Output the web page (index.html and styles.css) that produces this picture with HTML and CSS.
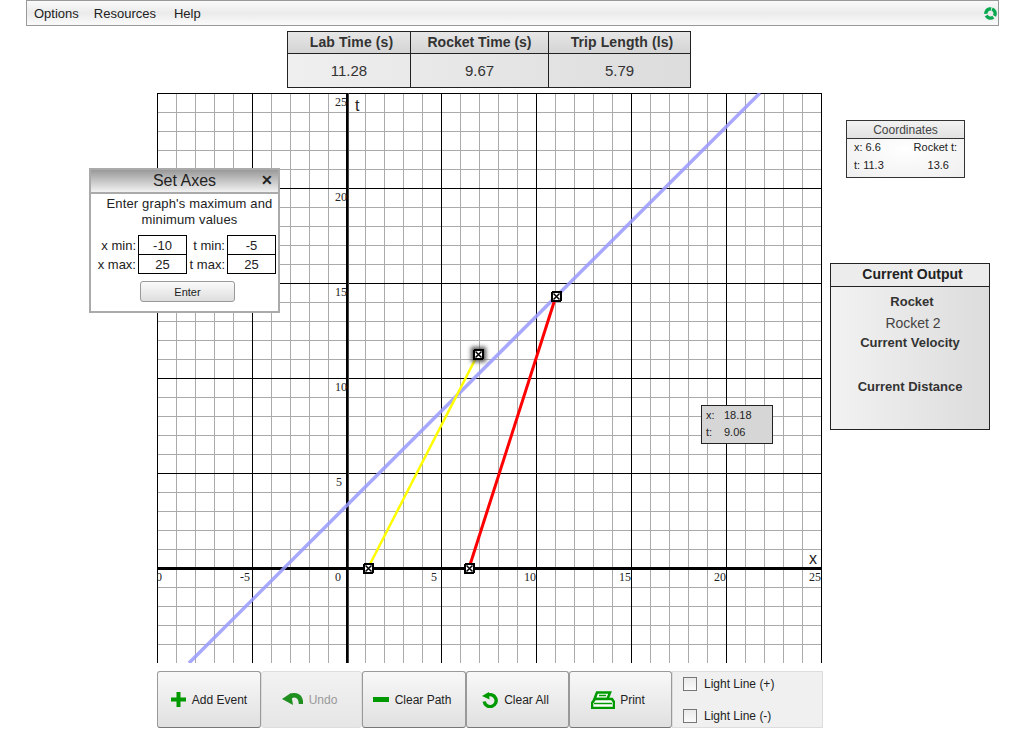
FILE: index.html

```html
<!DOCTYPE html>
<html lang="en">
<head>
  <meta charset="UTF-8" />
  <title>Rocket Spacetime Graph</title>
  <link rel="stylesheet" href="styles.css">
</head>
<body>
  <nav class="menubar">
    <span class="menu-item">Options</span>
    <span class="menu-item resources">Resources</span>
    <span class="menu-item">Help</span>
    <svg class="logo" width="13" height="13" viewBox="0 0 13 13">
      <circle cx="6.5" cy="6.5" r="4.6" fill="none" stroke="#0aa84f" stroke-width="3.4" stroke-dasharray="8 1.6" transform="rotate(-70 6.5 6.5)" />
    </svg>
  </nav>

  <div class="readouts">
    <div class="readout-col lab">
      <div class="readout-head">Lab Time (s)</div>
      <div class="readout-val">11.28</div>
    </div>
    <div class="readout-col rocket">
      <div class="readout-head">Rocket Time (s)</div>
      <div class="readout-val">9.67</div>
    </div>
    <div class="readout-col trip">
      <div class="readout-head">Trip Length (ls)</div>
      <div class="readout-val">5.79</div>
    </div>
  </div>

  <div class="workspace">
    <div class="graph">
      <svg class="plot" width="665" height="570" viewBox="0 0 665 570" shape-rendering="crispEdges">
        <defs>
          <pattern id="minor-h" width="19" height="19" patternUnits="userSpaceOnUse">
            <path d="M0 0.5H19" stroke="#aaa" fill="none" />
          </pattern>
          <pattern id="major-h" width="95" height="95" patternUnits="userSpaceOnUse">
            <path d="M0 0.5H95" stroke="#000" fill="none" />
          </pattern>
          <pattern id="minor-v" width="19" height="19" patternUnits="userSpaceOnUse">
            <path d="M0.5 0V19" stroke="#aaa" fill="none" />
          </pattern>
          <pattern id="major-v" width="95" height="95" patternUnits="userSpaceOnUse">
            <path d="M0.5 0V95" stroke="#000" fill="none" />
          </pattern>
          <!-- right of the t axis the grid sits one pixel further left -->
          <pattern id="minor-v2" width="19" height="19" patternUnits="userSpaceOnUse" patternTransform="translate(189 0)">
            <path d="M0.5 0V19" stroke="#aaa" fill="none" />
          </pattern>
          <pattern id="major-v2" width="95" height="95" patternUnits="userSpaceOnUse" patternTransform="translate(189 0)">
            <path d="M0.5 0V95" stroke="#000" fill="none" />
          </pattern>
          <filter id="glow" x="-60%" y="-60%" width="220%" height="220%">
            <feGaussianBlur stdDeviation="2" />
          </filter>
          <symbol id="marker" width="11" height="11" viewBox="0 0 11 11">
            <rect width="11" height="11" rx="2" fill="#000" />
            <rect x="2" y="2" width="7" height="7" fill="#fff" />
            <path d="M2.5 2.5L8.5 8.5M8.5 2.5L2.5 8.5" stroke="#000" stroke-width="1.5" shape-rendering="auto" />
          </symbol>
        </defs>
        <rect width="665" height="570" fill="#fff" />
        <rect width="665" height="570" fill="url(#minor-h)" />
        <rect width="189" height="570" fill="url(#minor-v)" />
        <rect x="189" width="476" height="570" fill="url(#minor-v2)" />
        <rect width="665" height="570" fill="url(#major-h)" />
        <rect width="189" height="570" fill="url(#major-v)" />
        <rect x="189" width="476" height="570" fill="url(#major-v2)" />
        <rect x="189" width="2" height="570" fill="#000" />
        <rect x="191" width="1" height="570" fill="#444" />
        <rect y="474" width="665" height="3" fill="#000" />

        <g class="tick">
          <text x="5" y="488" text-anchor="end">-10</text>
          <text x="93" y="488" text-anchor="end">-5</text>
          <text x="184" y="488" text-anchor="end">0</text>
          <text x="280" y="488" text-anchor="end">5</text>
          <text x="379" y="488" text-anchor="end">10</text>
          <text x="474" y="488" text-anchor="end">15</text>
          <text x="569" y="488" text-anchor="end">20</text>
          <text x="664" y="488" text-anchor="end">25</text>
          <text x="190" y="13" text-anchor="end">25</text>
          <text x="190" y="108" text-anchor="end">20</text>
          <text x="190" y="203" text-anchor="end">15</text>
          <text x="190" y="298" text-anchor="end">10</text>
          <text x="185" y="393" text-anchor="end">5</text>
        </g>
        <text class="axis-name" x="198" y="18">t</text>
        <text class="axis-name" x="652" y="471">x</text>

        <g shape-rendering="auto" fill="none">
          <line x1="32" y1="570" x2="603" y2="0" stroke="#9999ff" stroke-opacity="0.85" stroke-width="3.5" />
          <line x1="211" y1="475" x2="321" y2="261" stroke="#ffff00" stroke-width="2.5" />
          <line x1="312" y1="475" x2="399" y2="203" stroke="#ff0000" stroke-width="3" />
        </g>
        <rect x="314" y="254" width="15" height="15" fill="#555" filter="url(#glow)" shape-rendering="auto" />
        <use href="#marker" x="206" y="470" />
        <use href="#marker" x="307" y="470" />
        <use href="#marker" x="394" y="198" />
        <use href="#marker" x="316" y="256" />
      </svg>
      <div class="cursor-tip">
        <div class="tip-row"><span class="tip-key">x:</span><span>18.18</span></div>
        <div class="tip-row"><span class="tip-key">t:</span><span>9.06</span></div>
      </div>
    </div>

    <aside class="side">
      <div class="coords">
        <div class="coords-head">Coordinates</div>
        <div class="coords-body">
          <span>x: 6.6</span><span>Rocket t:</span>
          <span>t: 11.3</span><span class="coords-rocket">13.6</span>
        </div>
      </div>
      <div class="output">
        <div class="output-head">Current Output</div>
        <div class="output-body">
          <div class="output-rocket">Rocket</div>
          <div class="output-name">Rocket 2</div>
          <div class="output-velocity">Current Velocity</div>
          <div class="output-distance">Current Distance</div>
        </div>
      </div>
    </aside>
  </div>

  <div class="toolbar">
    <button class="tool add">
      <svg width="15" height="15" viewBox="0 0 15 15"><path d="M5.5 0h4v5.5H15v4H9.5V15h-4V9.5H0v-4h5.5z" fill="#009a00" /></svg>
      Add Event
    </button>
    <button class="tool undo off">
      <svg width="21" height="15" viewBox="0 0 21 15">
        <path d="M6 7C10 1 19 2 19 12" fill="none" stroke="#1f8f1f" stroke-width="4.5" />
        <path d="M0 7L9 1L11 13z" fill="#1f8f1f" />
      </svg>
      Undo
    </button>
    <button class="tool clear-path">
      <svg width="16" height="5" viewBox="0 0 16 5"><rect width="16" height="5" fill="#009a00" /></svg>
      Clear Path
    </button>
    <button class="tool clear-all">
      <svg width="16" height="16" viewBox="0 0 16 16">
        <path d="M5 3.5A6 6 0 1 1 2.2 9.5" fill="none" stroke="#009a00" stroke-width="3.4" />
        <path d="M0 4L7 0L7.5 7.5z" fill="#009a00" />
      </svg>
      Clear All
    </button>
    <button class="tool print">
      <svg width="24" height="18" viewBox="0 0 24 18">
        <path d="M6 1.5H19L16.5 8H3.5z" fill="#fff" stroke="#009a00" stroke-width="2.6" />
        <path d="M4 8H21L23 11V17H1V12z" fill="#fff" stroke="#009a00" stroke-width="2.6" />
        <path d="M3 12.5H21M8 4.5H15" stroke="#009a00" stroke-width="1.5" />
      </svg>
      Print
    </button>
    <div class="light-lines">
      <label class="light"><input type="checkbox"> Light Line (+)</label>
      <label class="light"><input type="checkbox"> Light Line (-)</label>
    </div>
  </div>

  <div class="dialog">
    <div class="dialog-title">Set Axes<span class="dialog-close">&#10005;</span></div>
    <p class="dialog-text">Enter graph's maximum and minimum values</p>
    <div class="axis-fields">
      <span class="field-label">x min:</span><input class="field" value="-10">
      <span class="field-label">t min:</span><input class="field" value="-5">
      <span class="field-label">x max:</span><input class="field" value="25">
      <span class="field-label">t max:</span><input class="field" value="25">
    </div>
    <button class="enter">Enter</button>
  </div>
</body>
</html>
```

FILE: styles.css

```css
html, body { margin: 0; padding: 0; height: 729px; overflow: hidden; }
body { position: relative; background: #fff; color: #222; font-family: "Liberation Sans", Arial, sans-serif; font-size: 12px; }

.menubar {
  display: flex;
  align-items: center;
  box-sizing: border-box;
  height: 26px;
  margin: 0 25px 0 26px;
  padding: 1px 1px 0 7px;
  border: 1px solid #999;
  background: linear-gradient(#fafafa, #ebebeb 50%, #fafafa);
  font-size: 13px;
}
.menu-item { margin-right: 15px; }
.menu-item.resources { margin-right: 18px; }
.logo { margin: -1px 0 0 auto; }

.readouts {
  display: flex;
  box-sizing: border-box;
  width: 404px;
  height: 57px;
  margin: 5px 0 5px 287px;
  border: 1px solid #222;
  background: linear-gradient(90deg, #efefef, #dcdcdc);
}
.readout-col { border-left: 1px solid #222; text-align: center; }
.readout-col.lab { width: 122px; border-left: 0; }
.readout-col.rocket { width: 137px; }
.readout-col.trip { flex: 1; }
.readout-head {
  height: 21px;
  border-bottom: 1px solid #222;
  line-height: 21px;
  font-size: 14px;
  font-weight: bold;
  color: #333;
  background: linear-gradient(#e6e6e6, #d4d4d4);
}
.lab .readout-head, .trip .readout-head { padding-left: 5px; letter-spacing: 0.1px; }
.readout-val { line-height: 33px; font-size: 15px; color: #333; }

.workspace { display: flex; height: 570px; margin-left: 157px; }
.graph { position: relative; width: 666px; height: 570px; }
.plot { display: block; overflow: hidden; }
.tick { font-family: "Liberation Serif", serif; font-size: 12px; fill: #222; }
.axis-name { font-family: "Liberation Sans", sans-serif; font-size: 16px; fill: #222; }

.cursor-tip {
  position: absolute;
  left: 544px;
  top: 312px;
  box-sizing: border-box;
  width: 72px;
  height: 39px;
  padding: 1px 0 0 4px;
  border: 1px solid #222;
  background: #d6d6d6;
  font-size: 11px;
  line-height: 17px;
}
.tip-row { display: flex; }
.tip-key { width: 18px; padding-left: 0; }

.side { width: 160px; margin-left: 7px; }
.coords {
  box-sizing: border-box;
  width: 119px;
  height: 58px;
  margin: 27px 0 0 16px;
  border: 1px solid #333;
  background: radial-gradient(#fff, #efefef);
  font-size: 11px;
}
.coords-head {
  height: 17px;
  border-bottom: 1px solid #333;
  background: linear-gradient(#f2f2f2, #e2e2e2);
  line-height: 18px;
  font-size: 12px;
  text-align: center;
  color: #444;
}
.coords-body {
  display: grid;
  grid-template-columns: 1fr auto;
  margin-top: -1px;
  padding: 0 7px;
  line-height: 18px;
}
.coords-rocket { padding-right: 8px; justify-self: end; }

.output {
  box-sizing: border-box;
  width: 160px;
  height: 167px;
  margin-top: 85px;
  border: 1px solid #222;
  background: linear-gradient(90deg, #f2f2f2, #dcdcdc);
  text-align: center;
  font-size: 13px;
}
.output-head {
  height: 22px;
  padding-left: 5px;
  border-bottom: 1px solid #222;
  background: #ececec;
  line-height: 21px;
  font-size: 14px;
  font-weight: bold;
}
.output-body { font-weight: bold; color: #333; }
.output-rocket { margin-top: 7px; padding-left: 4px; line-height: 16px; }
.output-name { margin-top: 5px; padding-left: 6px; line-height: 16px; font-weight: normal; font-size: 14px; color: #444; }
.output-velocity { margin-top: 4px; line-height: 16px; }
.output-distance { margin-top: 28px; line-height: 16px; }

.toolbar {
  display: flex;
  box-sizing: border-box;
  height: 58px;
  width: 666px;
  margin: 8px 0 0 157px;
}
.tool {
  display: flex;
  align-items: center;
  justify-content: center;
  gap: 6px;
  box-sizing: border-box;
  height: 57px;
  padding: 0;
  border: 1px solid #999;
  border-bottom: 1px solid #777;
  border-radius: 3px;
  background: linear-gradient(#f8f8f8, #e0e0e0);
  font: 12px "Liberation Sans", Arial, sans-serif;
  color: #222;
}
.tool.add { width: 104px; }
.tool.undo { width: 101px; padding-right: 4px; }
.tool.clear-path { width: 104px; padding-right: 4px; }
.tool.clear-all { width: 103px; padding-right: 4px; }
.tool.print { width: 103px; gap: 5px; padding-right: 5px; }
.tool.off { border-color: #ddd; background: linear-gradient(#f2f2f2, #e6e6e6); color: #999; }
.light-lines {
  display: flex;
  flex-direction: column;
  justify-content: space-between;
  box-sizing: border-box;
  flex: 1;
  height: 57px;
  padding: 4px 0 3px 10px;
  border: 1px solid #ddd;
  background: #f0f0f0;
}
.light { display: flex; align-items: center; gap: 7px; height: 16px; }
.light input {
  appearance: none;
  width: 14px;
  height: 14px;
  margin: 0;
  border: 1px solid #777;
  background: linear-gradient(#eaeaea, #fafafa);
}

.dialog {
  position: absolute;
  left: 89px;
  top: 168px;
  box-sizing: border-box;
  width: 191px;
  height: 145px;
  border: 2px solid #aaa;
  background: #fff;
  text-align: center;
}
.dialog-title {
  position: relative;
  height: 22px;
  border-bottom: 2px solid #aaa;
  background: linear-gradient(#999, #f2f2f2);
  line-height: 21px;
  font-size: 16px;
  color: #222;
}
.dialog-close { position: absolute; right: 5px; top: 0; font-size: 14px; font-weight: bold; }
.dialog-text { margin: 2px 4px 0 14px; font-size: 13px; line-height: 16px; letter-spacing: 0.15px; color: #222; }
.axis-fields {
  display: grid;
  grid-template-columns: 44px 49px 40px 49px;
  grid-auto-rows: 19px;
  margin: 7px 0 0 3px;
  font-size: 13px;
}
.field-label { text-align: right; line-height: 21px; padding-right: 2px; white-space: nowrap; }
.field {
  box-sizing: border-box;
  width: 100%;
  height: 20px;
  padding: 0;
  border: 1px solid #000;
  text-align: center;
  font: 13px "Liberation Sans", Arial, sans-serif;
  color: #222;
}
.enter {
  display: block;
  box-sizing: border-box;
  width: 95px;
  height: 21px;
  margin: 8px 0 0 49px;
  padding: 0;
  border: 1px solid #999;
  border-radius: 3px;
  background: linear-gradient(#fafafa, #dedede);
  font: 11px "Liberation Sans", Arial, sans-serif;
  color: #222;
}
```
